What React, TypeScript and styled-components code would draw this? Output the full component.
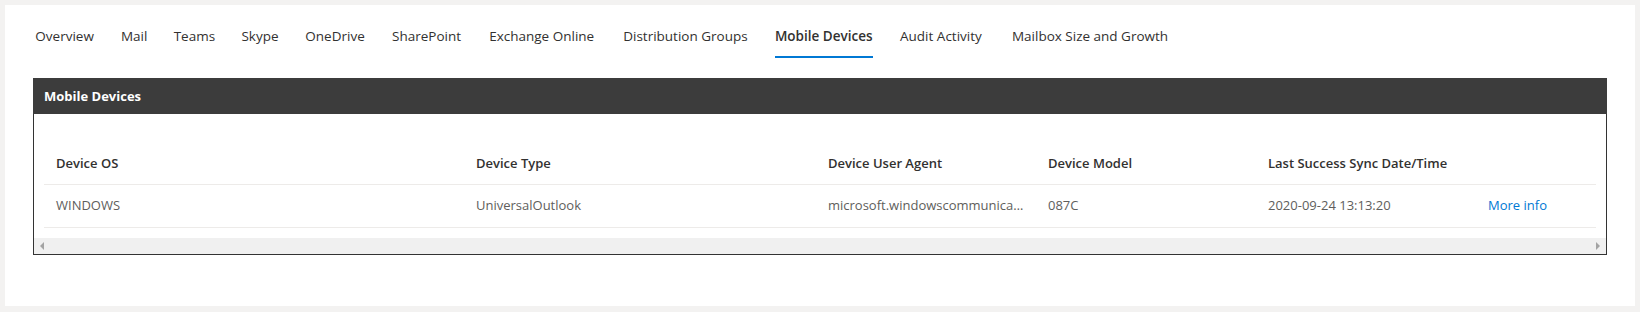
import React from "react";
import styled, { createGlobalStyle } from "styled-components";

const GlobalStyle = createGlobalStyle`
  html, body {
    margin: 0;
    padding: 0;
    background: #f3f2f1;
    font-family: "Segoe UI", "Open Sans", "Noto Sans", sans-serif;
    font-size: 13px;
    color: #323130;
  }
`;

const tabs = [
  "Overview",
  "Mail",
  "Teams",
  "Skype",
  "OneDrive",
  "SharePoint",
  "Exchange Online",
  "Distribution Groups",
  "Mobile Devices",
  "Audit Activity",
  "Mailbox Size and Growth",
];

const columns = [
  { key: "os", name: "Device OS" },
  { key: "type", name: "Device Type" },
  { key: "agent", name: "Device User Agent" },
  { key: "model", name: "Device Model" },
  { key: "sync", name: "Last Success Sync Date/Time" },
  { key: "more", name: "" },
];

const rows = [
  {
    os: "WINDOWS",
    type: "UniversalOutlook",
    agent: "microsoft.windowscommunicationsapps",
    model: "087C",
    sync: "2020-09-24 13:13:20",
  },
];

const Card = styled.div`
  margin: 5px;
  background: #fff;
  padding: 9px 28px 51px 28px;
`;

const TabBar = styled.div`
  display: flex;
  margin-left: -7px;
  margin-bottom: 20px;
`;

const Tab = styled.button<{ $selected?: boolean }>`
  position: relative;
  display: flex;
  align-items: center;
  height: 44px;
  padding: 0 8px;
  margin-right: 9px;
  border: none;
  background: transparent;
  font-family: inherit;
  font-size: 13.5px;
  line-height: 20px;
  color: #323130;
  font-weight: ${(p) => (p.$selected ? 600 : 400)};
  cursor: pointer;

  &::after {
    content: "";
    display: ${(p) => (p.$selected ? "block" : "none")};
    position: absolute;
    left: 8px;
    right: 8px;
    bottom: 0;
    height: 2px;
    background: #0078d4;
  }
`;

/* keeps the tab as wide as its bold version so nothing shifts on select */
const TabText = styled.span`
  display: flex;
  flex-direction: column;
  align-items: center;

  &::before {
    content: attr(data-content);
    display: block;
    height: 0;
    overflow: hidden;
    visibility: hidden;
    font-weight: 600;
  }
`;

const Panel = styled.section`
  border: 1px solid #333;
  border-top: none;
`;

const PanelHeader = styled.div`
  height: 36px;
  margin: 0 -1px;
  padding: 0 11px;
  display: flex;
  align-items: center;
  background: #3c3c3c;
  color: #fff;
  font-weight: 700;
  font-size: 13px;
`;

const PanelBody = styled.div`
  padding: 28px 10px 10px;
`;

const Row = styled.div<{ $header?: boolean }>`
  display: grid;
  grid-template-columns: 420px 352px 220px 220px 220px 1fr;
  height: 43px;
  box-sizing: border-box;
  border-bottom: 1px solid #edebe9;
  align-items: center;
  font-weight: ${(p) => (p.$header ? 600 : 400)};
  color: ${(p) => (p.$header ? "#323130" : "#605e5c")};
`;

const Cell = styled.div<{ $lift?: number }>`
  padding: 0 8px ${(p) => p.$lift ?? 1}px 12px;
  white-space: nowrap;
  overflow: hidden;
  text-overflow: ellipsis;
`;

const Link = styled.a`
  color: #0078d4;
  text-decoration: none;
  cursor: pointer;
`;

const ScrollTrack = styled.div`
  height: 16px;
  background: #f0f0f0;
  display: flex;
  justify-content: space-between;
  align-items: center;
`;

const ScrollArrow = styled.span<{ $dir: "left" | "right" }>`
  width: 16px;
  display: flex;
  justify-content: center;

  &::before {
    content: "";
    width: 0;
    height: 0;
    border-top: 4px solid transparent;
    border-bottom: 4px solid transparent;
    ${(p) =>
      p.$dir === "left"
        ? "border-right: 4px solid #a3a3a3;"
        : "border-left: 4px solid #a3a3a3;"}
  }
`;

export default function App() {
  const current = "Mobile Devices";
  return (
    <>
      <GlobalStyle />
      <Card>
        <TabBar>
          {tabs.map((t) => (
            <Tab key={t} $selected={t === current}>
              <TabText data-content={t}>{t}</TabText>
            </Tab>
          ))}
        </TabBar>

        <Panel>
          <PanelHeader>Mobile Devices</PanelHeader>
          <div>
            <PanelBody>
              <Row $header>
                {columns.map((c) => (
                  <Cell key={c.key}>{c.name}</Cell>
                ))}
              </Row>
              {rows.map((r, i) => (
                <Row key={i}>
                  <Cell $lift={3}>{r.os}</Cell>
                  <Cell $lift={3}>{r.type}</Cell>
                  <Cell $lift={3}>{r.agent}</Cell>
                  <Cell $lift={3}>{r.model}</Cell>
                  <Cell $lift={3}>{r.sync}</Cell>
                  <Cell $lift={3}>
                    <Link>More info</Link>
                  </Cell>
                </Row>
              ))}
            </PanelBody>
            <ScrollTrack>
              <ScrollArrow $dir="left" />
              <ScrollArrow $dir="right" />
            </ScrollTrack>
          </div>
        </Panel>
      </Card>
    </>
  );
}
